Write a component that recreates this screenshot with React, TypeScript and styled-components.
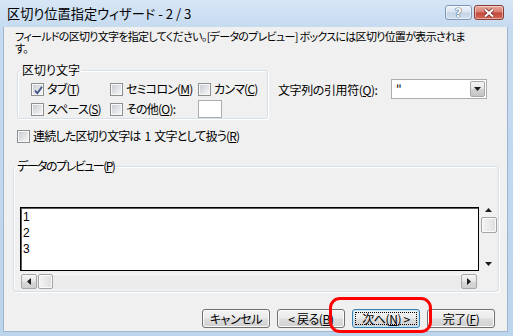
import React from "react";
import styled, { createGlobalStyle } from "styled-components";

const UI_FONT = `"Noto Sans CJK JP", "Noto Sans", sans-serif`;

const GlobalStyle = createGlobalStyle`
  html, body { margin: 0; padding: 0; background: #ffffff; }
  body { font-family: ${UI_FONT}; font-size: 12px; color: #000; }
  * { box-sizing: border-box; }
`;

const Window = styled.div`
  position: relative;
  width: 513px;
  height: 336px;
  display: flex;
  flex-direction: column;
  overflow: hidden;
  background: linear-gradient(#d7e6f6 0px, #c6dbf0 27px, #bcd4ec 100%);
  font-family: ${UI_FONT};
  font-feature-settings: "palt";
`;

const TitleBar = styled.div`
  height: 27px;
  flex: none;
  display: flex;
  align-items: flex-start;
  padding: 0 9px 0 7px;
`;

const Title = styled.div`
  flex: 1;
  margin-top: 5px;
  font-size: 13.2px;
  line-height: 17px;
  white-space: nowrap;
`;

const CaptionButtons = styled.div`
  display: flex;
  gap: 2px;
  margin-top: 5px;
`;

const CaptionButton = styled.div<{ $close?: boolean }>`
  width: ${(p) => (p.$close ? 30 : 27)}px;
  height: 15px;
  border-radius: 3px;
  border: 1px solid ${(p) => (p.$close ? "#8a3b33" : "#7d96b6")};
  background: ${(p) =>
    p.$close
      ? "linear-gradient(#e9aa9f, #d77b6f 48%, #c4473b 52%, #d06a5b)"
      : "linear-gradient(#eef3fa, #d9e4f1 48%, #c3d3e7 52%, #d3e0ef)"};
  box-shadow: inset 0 0 0 1px rgba(255, 255, 255, 0.45);
  display: flex;
  align-items: center;
  justify-content: center;
`;

const HelpGlyph = styled.span`
  font-family: "DejaVu Sans", sans-serif;
  font-weight: bold;
  font-size: 12px;
  line-height: 12px;
  color: #ffffff;
  text-shadow: 0 0 1px #3d5678, 0 0 1px #3d5678, 0 0 1px #3d5678;
`;

const Client = styled.div`
  flex: 1;
  margin: 0 5px 4px 3px;
  background: #f0f0f0;
  border: 1px solid #9fb5ce;
  border-top: none;
  display: flex;
  flex-direction: column;
  font-size: 12px;
  letter-spacing: -0.4px;
`;

const Instruction = styled.div`
  margin: 3px 0 0 11px;
  font-size: 11px;
  line-height: 12px;
  white-space: nowrap;
  letter-spacing: -0.7px;
`;

const Line = styled.span`
  display: block;
`;

const OptionsRow = styled.div`
  display: flex;
  align-items: flex-start;
  margin: 10px 0 0 13px;
`;

const GroupBox = styled.fieldset<{ $width: number }>`
  width: ${(p) => p.$width}px;
  margin: 0;
  padding: 0;
  min-width: 0;
  border: 1px solid #d5dfe5;
  border-radius: 3px;
  box-shadow: inset 1px 1px 0 #ffffff, 1px 1px 0 #ffffff;
`;

const Legend = styled.legend<{ $offset: number; $spacing: number }>`
  margin-left: ${(p) => p.$offset}px;
  padding: 0 2px;
  font-size: 12px;
  line-height: 12px;
  letter-spacing: ${(p) => p.$spacing}px;
  white-space: nowrap;
`;

const OptionGrid = styled.div`
  display: grid;
  grid-template-columns: 79px 88px auto;
  grid-auto-rows: 18px;
  row-gap: 2px;
  padding: 4px 0 0 13px;
`;

const CheckItem = styled.label`
  display: flex;
  align-items: center;
  gap: 3px;
  line-height: 14px;
  white-space: nowrap;
  letter-spacing: -0.8px;
  word-spacing: 2px;
`;

const Box = styled.span`
  position: relative;
  width: 13px;
  height: 13px;
  flex: none;
  padding: 1px;
  border: 1px solid #8e8f8f;
  background: linear-gradient(135deg, #c9cdd3, #f6f6f6) content-box, #f8f8f8;
`;

const CheckMark = styled.svg`
  position: absolute;
  left: 0;
  top: 0;
`;

const SmallInput = styled.span`
  width: 24px;
  height: 18px;
  border: 1px solid #abadb3;
  background: #ffffff;
  align-self: center;
`;

const QuoteRow = styled.div`
  display: flex;
  align-items: center;
  width: 209px;
  margin: 15px 0 0 10px;
  white-space: nowrap;
`;

const Combo = styled.div`
  margin-left: auto;
  width: 96px;
  height: 20px;
  padding: 1px;
  border: 1px solid #abadb3;
  background: #ffffff;
  display: flex;
  align-items: stretch;
`;

const ComboText = styled.span`
  flex: 1;
  padding-left: 3px;
  line-height: 16px;
`;

const ComboButton = styled.span`
  width: 15px;
  border: 1px solid #a9a9a9;
  border-radius: 2px;
  background: linear-gradient(#f4f4f4, #e6e6e6 50%, #d3d3d3 52%, #c4c4c4);
  display: flex;
  align-items: center;
  justify-content: center;
`;

const OneCharRow = styled.div`
  margin: 9px 0 0 13px;
  height: 16px;
  display: flex;
`;

const PreviewWrap = styled.div`
  margin: 16px 0 0 9px;
`;

const PreviewGrid = styled.div`
  display: grid;
  grid-template-columns: 459px 17px;
  grid-template-rows: 64px 15px;
  column-gap: 1px;
  row-gap: 3px;
  padding: 35px 0 2px 6px;
`;

const DataBox = styled.div`
  border: 1px solid #000000;
  box-shadow: inset 1px 1px 0 #5a5a5a;
  background: #ffffff;
  padding: 1px 0 0 2px;
  line-height: 16px;
  letter-spacing: 0;
  font-family: "Liberation Sans", Arial, sans-serif;
`;

const VScroll = styled.div`
  display: flex;
  flex-direction: column;
  align-items: center;
`;

const Thumb = styled.span<{ $w: number; $h: number }>`
  width: ${(p) => p.$w}px;
  height: ${(p) => p.$h}px;
  flex: none;
  border: 1px solid #a3a3a3;
  border-radius: 2px;
  background: linear-gradient(90deg, #f4f4f4, #dedede);
  box-shadow: inset 0 0 0 1px #fbfbfb;
`;

const HScroll = styled.div`
  display: flex;
  gap: 1px;
  padding: 0 2px 0 1px;
  background: #ececec;
  box-shadow: inset 0 1px 0 #f9f9f9;
`;

const ScrollButton = styled.span<{ $end?: boolean }>`
  width: 16px;
  height: 15px;
  margin-left: ${(p) => (p.$end ? "auto" : "0")};
  border: 1px solid #a8a8a8;
  border-radius: 2px;
  background: linear-gradient(#f6f6f6, #e4e4e4 50%, #d6d6d6 52%, #cfcfcf);
  display: flex;
  align-items: center;
  justify-content: center;
`;

const ButtonRow = styled.div`
  display: flex;
  justify-content: flex-end;
  gap: 7px;
  margin: 17px 12px 0 0;
`;

const Button = styled.button<{ $default?: boolean }>`
  position: relative;
  width: 68px;
  height: 19px;
  padding: 0;
  font-family: ${UI_FONT};
  font-feature-settings: "palt";
  font-size: 12px;
  line-height: 14px;
  letter-spacing: -0.4px;
  color: #000000;
  border: 1px solid ${(p) => (p.$default ? "#3c7fb1" : "#707070")};
  border-radius: 3px;
  background: linear-gradient(#f3f3f3, #ebebeb 48%, #dddddd 52%, #d0d0d0);
  box-shadow: inset 0 0 0 1px ${(p) => (p.$default ? "#c3e6fb" : "#fbfbfb")};
  white-space: nowrap;

  &::after {
    content: "";
    display: ${(p) => (p.$default ? "block" : "none")};
    position: absolute;
    inset: 2px;
    border: 1px dotted #000000;
  }
`;

const Highlight = styled.div`
  position: absolute;
  left: 329px;
  top: 297px;
  width: 103px;
  height: 36px;
  border: 3px solid #ff0000;
  border-radius: 11px;
  pointer-events: none;
`;

function Check({ checked, children }: { checked?: boolean; children: React.ReactNode }) {
  return (
    <CheckItem>
      <Box>
        {checked && (
          <CheckMark width="13" height="13" viewBox="0 0 13 13">
            <path d="M3 6.5 L5.3 9.3 L10 2.8" fill="none" stroke="#3e548a" strokeWidth="1.9" />
          </CheckMark>
        )}
      </Box>
      <span>{children}</span>
    </CheckItem>
  );
}

const Tri = ({ dir }: { dir: "up" | "down" | "left" | "right" }) => {
  const d = {
    up: "M0 4 L3.5 0 L7 4 Z",
    down: "M0 0 L7 0 L3.5 4 Z",
    left: "M4 0 L4 7 L0 3.5 Z",
    right: "M0 0 L4 3.5 L0 7 Z",
  }[dir];
  const w = dir === "up" || dir === "down" ? 7 : 4;
  const h = dir === "up" || dir === "down" ? 4 : 7;
  return (
    <svg width={w} height={h} viewBox={`0 0 ${w} ${h}`}>
      <path d={d} fill="#1e1e1e" />
    </svg>
  );
};

const UpArrow = styled.span`
  display: flex;
  margin-top: 1px;
`;

const DownArrow = styled.span`
  display: flex;
  margin-top: auto;
  margin-bottom: 5px;
`;

const ThumbSpacer = styled.span`
  display: flex;
  margin-top: 5px;
`;

export default function App() {
  return (
    <>
      <GlobalStyle />
      <Window>
        <TitleBar>
          <Title>区切り位置指定ウィザード - 2 / 3</Title>
          <CaptionButtons>
            <CaptionButton>
              <HelpGlyph>?</HelpGlyph>
            </CaptionButton>
            <CaptionButton $close>
              <svg width="12" height="10" viewBox="0 0 12 10">
                <path d="M2 1.5 L10 8.5 M10 1.5 L2 8.5" stroke="#6e2a22" strokeWidth="3.6" />
                <path d="M2 1.5 L10 8.5 M10 1.5 L2 8.5" stroke="#ffffff" strokeWidth="2" />
              </svg>
            </CaptionButton>
          </CaptionButtons>
        </TitleBar>
        <Client>
          <Instruction>
            <Line>フィールドの区切り文字を指定してください。[データのプレビュー] ボックスには区切り位置が表示されま</Line>
            <Line>す。</Line>
          </Instruction>
          <OptionsRow>
            <GroupBox $width={251}>
              <Legend $offset={2} $spacing={0}>
                区切り文字
              </Legend>
              <OptionGrid>
                <Check checked>
                  タブ(<u>T</u>)
                </Check>
                <Check>
                  セミコロン(<u>M</u>)
                </Check>
                <Check>
                  カンマ(<u>C</u>)
                </Check>
                <Check>
                  スペース(<u>S</u>)
                </Check>
                <Check>
                  その他(<u>O</u>):
                </Check>
                <SmallInput />
              </OptionGrid>
            </GroupBox>
            <QuoteRow>
              <span>
                文字列の引用符(<u>Q</u>):
              </span>
              <Combo>
                <ComboText>"</ComboText>
                <ComboButton>
                  <Tri dir="down" />
                </ComboButton>
              </Combo>
            </QuoteRow>
          </OptionsRow>
          <OneCharRow>
            <Check>
              連続した区切り文字は 1 文字として扱う(<u>R</u>)
            </Check>
          </OneCharRow>
          <PreviewWrap>
            <GroupBox $width={486}>
              <Legend $offset={1} $spacing={-1.5}>
                データのプレビュー(<u>P</u>)
              </Legend>
              <PreviewGrid>
                <DataBox>
                  <div>1</div>
                  <div>2</div>
                  <div>3</div>
                </DataBox>
                <VScroll>
                  <UpArrow>
                    <Tri dir="up" />
                  </UpArrow>
                  <ThumbSpacer>
                    <Thumb $w={16} $h={16} />
                  </ThumbSpacer>
                  <DownArrow>
                    <Tri dir="down" />
                  </DownArrow>
                </VScroll>
                <HScroll>
                  <ScrollButton>
                    <Tri dir="left" />
                  </ScrollButton>
                  <Thumb $w={15} $h={15} />
                  <ScrollButton $end>
                    <Tri dir="right" />
                  </ScrollButton>
                </HScroll>
              </PreviewGrid>
            </GroupBox>
          </PreviewWrap>
          <ButtonRow>
            <Button>キャンセル</Button>
            <Button>
              &lt; 戻る(<u>B</u>)
            </Button>
            <Button $default>
              次へ(<u>N</u>) &gt;
            </Button>
            <Button>
              完了(<u>F</u>)
            </Button>
          </ButtonRow>
        </Client>
        <Highlight />
      </Window>
    </>
  );
}
